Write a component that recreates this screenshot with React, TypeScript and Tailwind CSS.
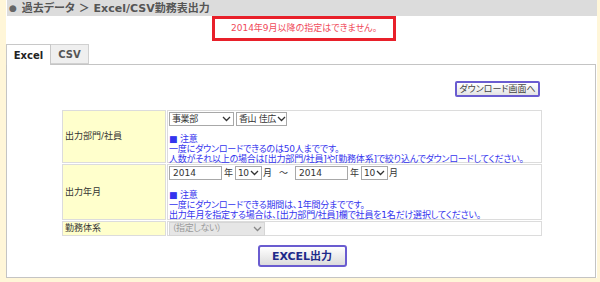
import React from "react";

type SelProps = {
  className: string;
  text: string;
  disabled?: boolean;
};

function Chevron({ color }: { color: string }) {
  return (
    <svg width="9" height="6" viewBox="0 0 9 6" className="shrink-0">
      <polyline points="1,1 4.5,4.5 8,1" fill="none" stroke={color} strokeWidth="1.3" />
    </svg>
  );
}

function Sel({ className, text, disabled }: SelProps) {
  return (
    <div
      className={
        "h-[14px] border flex items-center justify-between gap-[1px] pl-[2px] pr-[2px] text-[9px] leading-none whitespace-nowrap overflow-hidden " +
        (disabled
          ? "bg-[#e6e6e6] border-[#d6d6d6] text-[#999] "
          : "bg-white border-[#a8a8a8] text-[#333] ") +
        className
      }
    >
      <span className="tracking-[-0.4px]">{text}</span>
      <Chevron color={disabled ? "#888" : "#333"} />
    </div>
  );
}

function Note({ lines }: { lines: string[] }) {
  return (
    <div className="text-[9px] leading-[10px] text-[#3434ee] tracking-[-0.2px] whitespace-nowrap">
      <div>■ 注意</div>
      {lines.map((l) => (
        <div key={l}>{l}</div>
      ))}
    </div>
  );
}

export default function App() {
  return (
    <div className="w-[600px] h-[282px] bg-[#fff6d8] pl-[6px] pr-[3px] pb-[4px] font-['DejaVu_Sans','Noto_Sans_CJK_JP',sans-serif] text-[#333] [font-feature-settings:'palt']">
      <div className="h-full bg-white flex flex-col">
        {/* header */}
        <div className="h-[16px] bg-[#dcdcdc] ml-[1px] flex items-center pl-[2px] text-[11px] font-bold text-[#555] leading-none">
          <span className="text-[9px] text-[#666] mr-[5px]">●</span>
          過去データ ＞ Excel/CSV勤務表出力
        </div>

        {/* message */}
        <div className="ml-[206px] w-[184px] h-[25px] border-[3px] border-[#e8202a] flex items-center justify-center text-[9px] text-[#f04a5a] leading-none">
          2014年9月以降の指定はできません。
        </div>

        {/* tabs */}
        <div className="flex items-end mt-[2px] h-[21px]">
          <div className="w-[45px] h-[21px] bg-white border border-b-0 border-[#c8c8c8] flex items-center justify-center text-[10px] font-bold text-[#222] relative top-[1px]">
            Excel
          </div>
          <div className="w-[38px] h-[20px] bg-[#efefef] border border-l-0 border-[#d0d0d0] flex items-center justify-center text-[10px] font-bold text-[#555]">
            CSV
          </div>
        </div>

        {/* panel */}
        <div className="flex-1 mr-[1px] border border-[#c4c4c4] pt-[16px] pl-[55px]">
          <div className="w-[480px] flex flex-col">
            <div className="flex justify-end pr-[2px]">
              <div className="w-[85px] h-[16px] rounded-[2px] border-2 border-[#6a5cd0] bg-gradient-to-b from-white to-[#e4e4e4] flex items-center justify-center text-[9px] text-[#444] leading-none">
                ダウンロード画面へ
              </div>
            </div>

            {/* table */}
            <div className="mt-[13px] grid grid-cols-[104px_1fr] gap-[1px] text-[9px] leading-none">
              <div className="h-[53px] bg-[#ffffcc] border border-[#dcdcdc] flex items-center pl-[2px] text-[#333]">
                出力部門/社員
              </div>
              <div className="h-[53px] border border-[#dcdcdc] pl-[1px] pt-[1px] flex flex-col">
                <div className="flex gap-[2px]">
                  <Sel className="w-[65px]" text="事業部" />
                  <Sel className="w-[51px]" text="香山 佳広" />
                </div>
                <div className="mt-[8px]">
                  <Note
                    lines={[
                      "一度にダウンロードできるのは50人までです。",
                      "人数がそれ以上の場合は[出力部門/社員]や[勤務体系]で絞り込んでダウンロードしてください。",
                    ]}
                  />
                </div>
              </div>

              <div className="h-[56px] bg-[#ffffcc] border border-[#dcdcdc] flex items-center pl-[2px] text-[#333]">
                出力年月
              </div>
              <div className="h-[56px] border border-[#dcdcdc] pl-[1px] pt-[1px] flex flex-col">
                <div className="flex items-center text-[9px] text-[#333]">
                  <div className="w-[53px] h-[14px] border border-[#a8a8a8] flex items-center pl-[3px]">2014</div>
                  <span className="mx-[2px]">年</span>
                  <Sel className="w-[27px]" text="10" />
                  <span className="ml-[1px]">月</span>
                  <span className="mx-[7px]">～</span>
                  <div className="w-[53px] h-[14px] border border-[#a8a8a8] flex items-center pl-[3px]">2014</div>
                  <span className="mx-[2px]">年</span>
                  <Sel className="w-[27px]" text="10" />
                  <span className="ml-[1px]">月</span>
                </div>
                <div className="mt-[10px]">
                  <Note
                    lines={[
                      "一度にダウンロードできる期間は、1年間分までです。",
                      "出力年月を指定する場合は、[出力部門/社員]欄で社員を1名だけ選択してください。",
                    ]}
                  />
                </div>
              </div>

              <div className="h-[15px] bg-[#ffffcc] border border-[#dcdcdc] flex items-center pl-[2px] text-[#333]">
                勤務体系
              </div>
              <div className="h-[15px] border border-[#dcdcdc] pl-[1px] flex items-center">
                <Sel className="w-[96px] h-[13px]" text="（指定しない）" disabled />
              </div>
            </div>

            <div className="flex justify-center mt-[9px]">
              <div className="w-[89px] h-[22px] rounded-[3px] border-2 border-[#6a5cd0] bg-gradient-to-b from-white to-[#dcdcdc] flex items-center justify-center text-[11px] font-bold text-[#1e2a8a] leading-none">
                EXCEL出力
              </div>
            </div>
          </div>
        </div>
      </div>
    </div>
  );
}
